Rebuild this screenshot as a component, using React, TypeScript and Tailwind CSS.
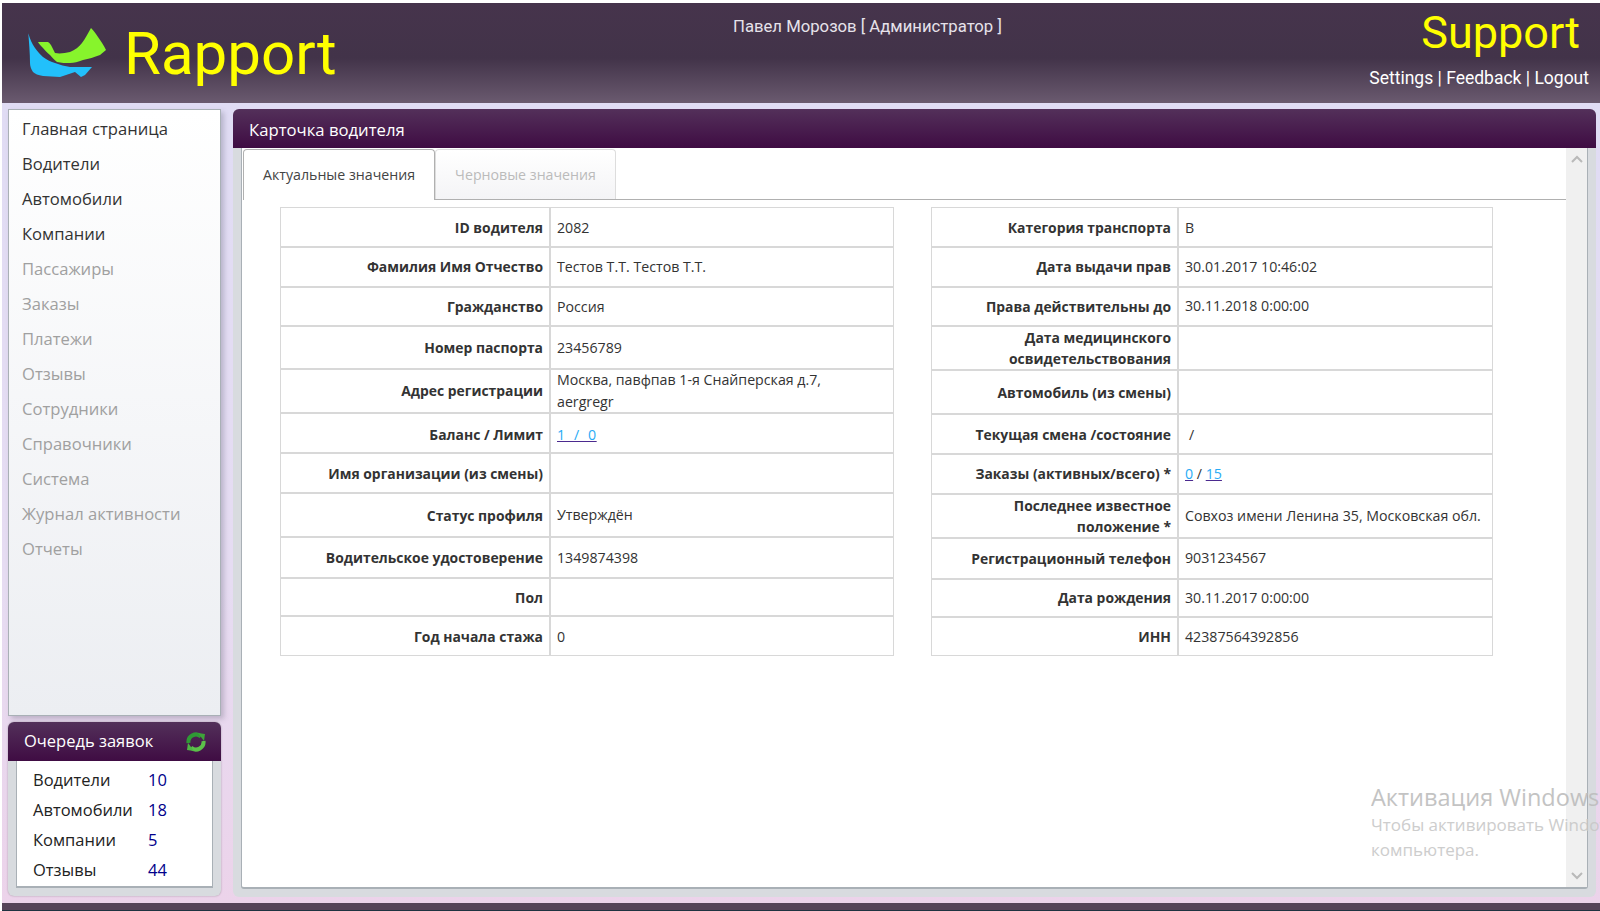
import React from "react";

const nav: [string, boolean][] = [
  ["Главная страница", true], ["Водители", true], ["Автомобили", true], ["Компании", true],
  ["Пассажиры", false], ["Заказы", false], ["Платежи", false], ["Отзывы", false],
  ["Сотрудники", false], ["Справочники", false], ["Система", false], ["Журнал активности", false], ["Отчеты", false],
];

const Lnk = ({ children }: { children: React.ReactNode }) => (
  <a className="text-[#29abf5] underline decoration-[#4b2a8f]">{children}</a>
);

const Low = ({ children }: { children: React.ReactNode }) => <span className="block pt-[3px]">{children}</span>;

type Row = [React.ReactNode, React.ReactNode, number];
const left: Row[] = [
  ["ID водителя", "2082", 39],
  ["Фамилия Имя Отчество", "Тестов Т.Т. Тестов Т.Т.", 40],
  ["Гражданство", "Россия", 39],
  ["Номер паспорта", "23456789", 43],
  ["Адрес регистрации", <span className="my-[-1px] block leading-[22px]">Москва, павфпав 1-я Снайперская д.7,<br />aergregr</span>, 44],
  [<Low>Баланс / Лимит</Low>, <Low><span className="tracking-[0.5px]"><Lnk>1&nbsp; /&nbsp; 0</Lnk></span></Low>, 40],
  ["Имя организации (из смены)", "", 40],
  ["Статус профиля", "Утверждён", 44],
  ["Водительское удостоверение", "1349874398", 41],
  ["Пол", "", 38],
  ["Год начала стажа", "0", 39],
];
const right: Row[] = [
  ["Категория транспорта", "В", 39],
  ["Дата выдачи прав", "30.01.2017 10:46:02", 40],
  ["Права действительны до", "30.11.2018 0:00:00", 39],
  [<span className="block leading-[21px]">Дата медицинского<br />освидетельствования</span>, "", 44],
  [<span className="block pt-[2px]">Автомобиль (из смены)</span>, "", 44],
  [<span className="block pt-[2px]">Текущая смена /состояние</span>, <span className="block pl-1 pt-[2px]">/</span>, 40],
  ["Заказы (активных/всего) *", <><Lnk>0</Lnk> / <Lnk>15</Lnk></>, 40],
  [<span className="block leading-[21px]">Последнее известное<br />положение *</span>, "Совхоз имени Ленина 35, Московская обл.", 44],
  ["Регистрационный телефон", "9031234567", 41],
  ["Дата рождения", "30.11.2017 0:00:00", 38],
  ["ИНН", "42387564392856", 39],
];

const cell = "border-2 border-[#d8d8d8] py-0 [tr:first-child>&]:border-t [tr:first-child>&]:pt-[2px] [tr:last-child>&]:border-b";

function Info({ rows, w, lw }: { rows: Row[]; w: string; lw: string }) {
  return (
    <table className={`${w} table-fixed border-collapse text-[14px] text-[#333]`}>
      <colgroup><col className={lw} /><col /></colgroup>
      <tbody>
        {rows.map((r, i) => (
          <tr key={i} style={{ height: r[2] }}>
            <td className={`${cell} border-l pl-[7px] pr-[5.5px] text-right text-[13.9px] font-bold leading-[21px]`}>{r[0]}</td>
            <td className={`${cell} border-r pl-[6.5px] pr-[4px] text-[14.2px]`}>{r[1]}</td>
          </tr>
        ))}
      </tbody>
    </table>
  );
}

const Chevron = ({ up }: { up?: boolean }) => (
  <svg width="12" height="8" viewBox="0 0 12 8" className="mx-auto">
    <path d={up ? "M1 7 L6 2 L11 7" : "M1 1 L6 6 L11 1"} fill="none" stroke="#b9b9b9" strokeWidth="2" />
  </svg>
);

export default function App() {
  return (
    <div className="relative flex h-[911px] w-[1600px] flex-col overflow-hidden bg-white pl-[2px] pt-[3px] font-['Open_Sans',sans-serif]">
      <header className="flex h-[100px] shrink-0 bg-[linear-gradient(#46344c_0%,#423349_55%,#6a5a6f_100%)] font-['Roboto',sans-serif]">
        <div className="flex w-[400px] items-start pl-[25px] pt-[24px]">
          <svg width="82" height="52" viewBox="27 27 82 52" className="shrink-0">
            <path d="M28.3 33.3 C30 39 32 44 35 48 C38 52 40 54 43 57 C47 60 51 62 55 63 C60 65 65 66 70 67 L92 67 L85 75 L81 77 L75 72 L60 77 L43 76 C38 75 35 74 33 72 C31 69 30 66 30 63 C30 53 29 43 28.3 33.3 Z" fill="#22c0fb" />
            <path d="M38 42 L48 42 C50 43 51 45 52 47 L55 53 C60 54 65 53 70 52 C75 50 79 47 82 43 C85 39 88 33 91 28 C94 31 96 34 98 37 C101 41 104 46 106 50 L100 55 C94 57 89 59 83 60 C78 62 74 63 70 63 C66 63 61 63 57 62 C54 60 52 57 50 55 C47 53 45 50 43 48 C41 46 39 44 38 42 Z" fill="#87f42c" />
          </svg>
          <span className="ml-[15px] mt-[-9px] text-[60px] leading-[72px] text-[#ffff00]">Rapport</span>
        </div>
        <div className="flex-1 pl-[331px] pt-[12px] text-[16.7px] leading-[24px] text-[#e6e2ea]">Павел Морозов [ Администратор ]</div>
        <div className="flex w-[340px] flex-col items-end pr-[11px] pt-[4px] text-white">
          <span className="pr-[9px] text-[45px] leading-[52px] text-[#ffff00]">Support</span>
          <span className="mt-[7px] text-[17.5px] leading-[24px]">Settings | Feedback | Logout</span>
        </div>
      </header>

      <div className="flex flex-1 gap-[12px] bg-[linear-gradient(#e0dcf4_0%,#e6dcf2_60%,#ecd3ea_100%)] pb-[6px] pl-[6px] pr-[2px] pt-[6px]">
        <aside className="flex w-[213px] shrink-0 flex-col gap-[6px]">
          <nav className="flex h-[607px] flex-col border border-[#a9b0b6] bg-[linear-gradient(#ffffff_0%,#eceef2_100%)] pl-[13px] pt-[1px] text-[16.6px] shadow-[3px_3px_5px_rgba(90,90,110,0.3)]">
            {nav.map(([t, a]) => (
              <div key={t} className={`h-[35px] leading-[35px] ${a ? "text-[#333]" : "text-[#a0a0a0]"}`}>{t}</div>
            ))}
          </nav>
          <div className="flex h-[174px] flex-col overflow-hidden rounded-[6px] bg-[#d8dbdf] shadow-[0_0_2px_rgba(0,0,0,0.3)]">
            <div className="flex h-[39px] shrink-0 items-center justify-between bg-[linear-gradient(#53305a_0%,#3f0c43_100%)] pl-[16px] pr-[15px] text-[16.5px] text-white">
              Очередь заявок
              <svg width="20" height="20" viewBox="0 0 20 20">
                <path d="M2.5 11 A7.5 7.5 0 0 1 15 4.5" fill="none" stroke="#2f9a35" strokeWidth="4" />
                <path d="M17.5 9 A7.5 7.5 0 0 1 5 15.5" fill="none" stroke="#5cc04a" strokeWidth="4" />
                <path d="M12 1 L19 2 L18 9 Z" fill="#3fa33a" />
                <path d="M8 19 L1 18 L2 11 Z" fill="#4fb545" />
              </svg>
            </div>
            <div className="mx-[8px] mb-[8px] flex-1 border-x border-b-2 border-[#a9b0b6] bg-white pl-[16px] pt-[4px] text-[16.5px] text-[#222]">
              {[["Водители", "10"], ["Автомобили", "18"], ["Компании", "5"], ["Отзывы", "44"]].map(([a, b]) => (
                <div key={a} className="flex h-[30px] items-center">
                  <span className="w-[115px]">{a}</span>
                  <span className="text-[#00008b]">{b}</span>
                </div>
              ))}
            </div>
          </div>
        </aside>

        <main className="mr-[2px] flex min-w-0 flex-1 flex-col overflow-hidden rounded-[6px] bg-[#d8dbdf]">
          <div className="flex h-[39px] shrink-0 items-center bg-[linear-gradient(#53305a_0%,#3f0c43_100%)] pl-[16px] pt-[2px] text-[16.7px] text-white">Карточка водителя</div>
          <div className="mb-[8px] ml-[8px] mr-[8px] flex min-h-0 flex-1 rounded-b-[3px] border-x border-b-2 border-[#a9b0b6] bg-white">
            <div className="flex-1 pl-[1px] pt-[1px]">
              <div className="flex h-[51px] border-b border-[#b0b0b0] text-[14.2px]">
                <div className="flex h-[51px] w-[192px] items-center justify-center rounded-t-[4px] border border-b-0 border-[#b0b0b0] bg-white text-[#444]">Актуальные значения</div>
                <div className="flex h-[50px] w-[181px] items-center justify-center rounded-t-[4px] border border-b-0 border-[#ddd] bg-[linear-gradient(#ffffff,#f4f4f6)] text-[#bbb]">Черновые значения</div>
              </div>
              <div className="flex gap-[37px] pl-[37px] pt-[7px]">
                <Info rows={left} w="w-[614px]" lw="w-[269px]" />
                <Info rows={right} w="w-[562px]" lw="w-[246px]" />
              </div>
            </div>
            <div className="flex w-[21px] shrink-0 flex-col justify-between bg-[#f0f0f0] py-[7px]">
              <Chevron up />
              <Chevron />
            </div>
          </div>
        </main>
      </div>
      <div className="h-[7px] shrink-0 bg-[#564358]" />
      <div className="h-[1px] shrink-0 bg-[#1f3340]" />

      <div className="absolute left-[1371px] top-[782px] w-[229px] overflow-hidden whitespace-nowrap text-[#bdbdbd] opacity-90">
        <div className="text-[23.5px] leading-[30px]">Активация Windows</div>
        <div className="text-[17px] leading-[25px] text-[#c8c8c8]">Чтобы активировать Windows</div>
        <div className="text-[17px] leading-[25px] text-[#c8c8c8]">компьютера.</div>
      </div>
    </div>
  );
}
